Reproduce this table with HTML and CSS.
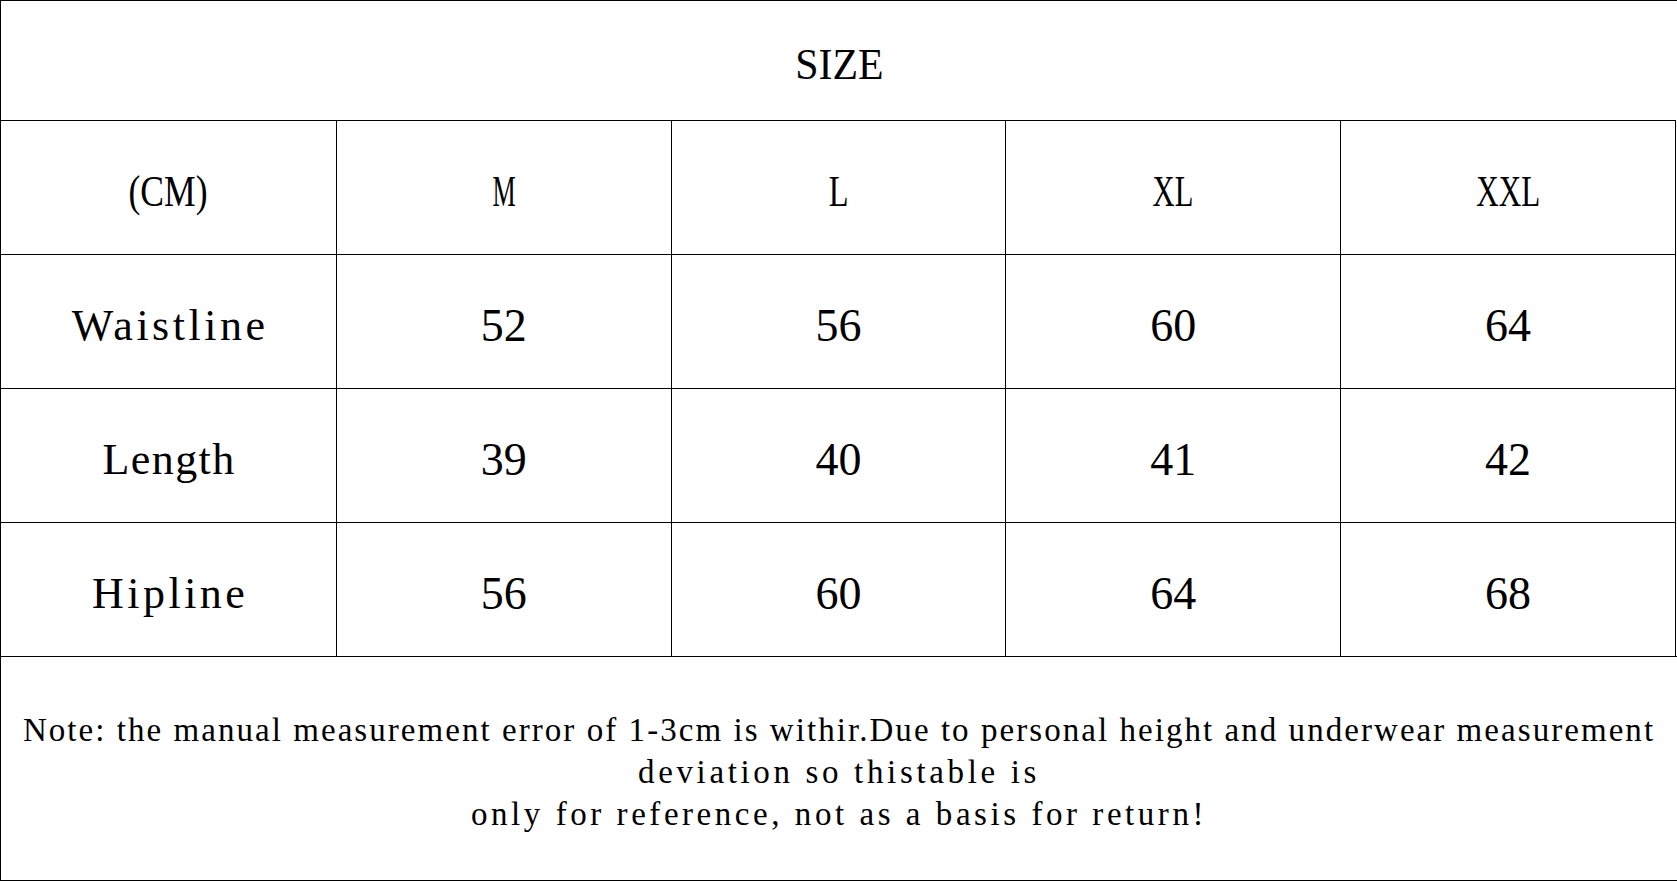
FILE: index.html
```html
<!DOCTYPE html>
<html lang="en">
<head>
<meta charset="utf-8">
<title>SIZE</title>
<link rel="stylesheet" href="styles.css">
</head>
<body>
<div class="sheet">
  <div class="title"><span class="txt sx-size">SIZE</span></div>
  <div class="grid">
    <div class="cell first"><span class="txt sx-cm">(CM)</span></div>
    <div class="cell"><span class="txt sx-m">M</span></div>
    <div class="cell"><span class="txt sx-l">L</span></div>
    <div class="cell"><span class="txt sx-xl">XL</span></div>
    <div class="cell"><span class="txt sx-xxl">XXL</span></div>

    <div class="cell first"><span class="label">Waistline</span></div>
    <div class="cell"><span class="num">52</span></div>
    <div class="cell"><span class="num">56</span></div>
    <div class="cell"><span class="num">60</span></div>
    <div class="cell"><span class="num">64</span></div>

    <div class="cell first"><span class="label label-tight">Length</span></div>
    <div class="cell"><span class="num">39</span></div>
    <div class="cell"><span class="num">40</span></div>
    <div class="cell"><span class="num">41</span></div>
    <div class="cell"><span class="num">42</span></div>

    <div class="cell first"><span class="label">Hipline</span></div>
    <div class="cell"><span class="num">56</span></div>
    <div class="cell"><span class="num">60</span></div>
    <div class="cell"><span class="num">64</span></div>
    <div class="cell"><span class="num">68</span></div>
  </div>
  <div class="note">
    <p class="note-text"><span class="line line-1">Note: the manual measurement error of 1-3cm is withir.Due to personal height and underwear measurement</span><span class="line line-2">deviation so thistable is</span><span class="line line-3">only for reference, not as a basis for return!</span></p>
  </div>
</div>
</body>
</html>
```
FILE: styles.css
```css
html, body {
  margin: 0;
  padding: 0;
  background: #fff;
}

body {
  font-family: "Liberation Serif", "Times New Roman", serif;
  color: #000;
}

.sheet {
  box-sizing: border-box;
  width: 1677px;
  height: 881px;
  border-left: 1px solid #000;
  border-top: 1px solid #000;
  border-bottom: 1px solid #000;
  display: flex;
  flex-direction: column;
  overflow: hidden;
}

.title {
  flex: none;
  height: 119px;
  box-sizing: border-box;
  padding-top: 8px;
  display: flex;
  align-items: center;
  justify-content: center;
}

.txt {
  display: inline-block;
  font-size: 45px;
  line-height: 1;
  white-space: nowrap;
}

.sx-size { transform: scaleX(0.93); }
.sx-cm { transform: scaleX(0.79); }
.sx-m { transform: scaleX(0.58); }
.sx-l { transform: scaleX(0.72); }
.sx-xl { transform: scaleX(0.68); }
.sx-xxl { transform: scaleX(0.69); }

.grid {
  flex: none;
  height: 536px;
  margin-right: 1px;
  border-right: 1px solid #000;
  display: grid;
  grid-template-columns: repeat(5, 1fr);
  grid-template-rows: repeat(4, 1fr);
}

.cell {
  box-sizing: border-box;
  border-top: 1px solid #000;
  border-left: 1px solid #000;
  padding-top: 8px;
  display: flex;
  align-items: center;
  justify-content: center;
  min-width: 0;
}

.cell.first {
  border-left: none;
}

.label {
  font-size: 44px;
  line-height: 1;
  letter-spacing: 3.5px;
  padding-left: 3.5px;
  white-space: nowrap;
}

.label-tight {
  letter-spacing: 1.4px;
  padding-left: 1.4px;
}

.num {
  font-size: 46px;
  line-height: 1;
}

.note {
  flex: 1;
  border-top: 1px solid #000;
  box-sizing: border-box;
  padding-top: 6px;
  display: flex;
  align-items: center;
  justify-content: center;
}

.note-text {
  margin: 0;
  font-size: 33px;
  line-height: 42px;
  text-align: center;
  white-space: nowrap;
}

.line {
  display: block;
}

.line-1 {
  letter-spacing: 2.05px;
}

.line-2 {
  letter-spacing: 3.65px;
}

.line-3 {
  letter-spacing: 3.55px;
}
```
